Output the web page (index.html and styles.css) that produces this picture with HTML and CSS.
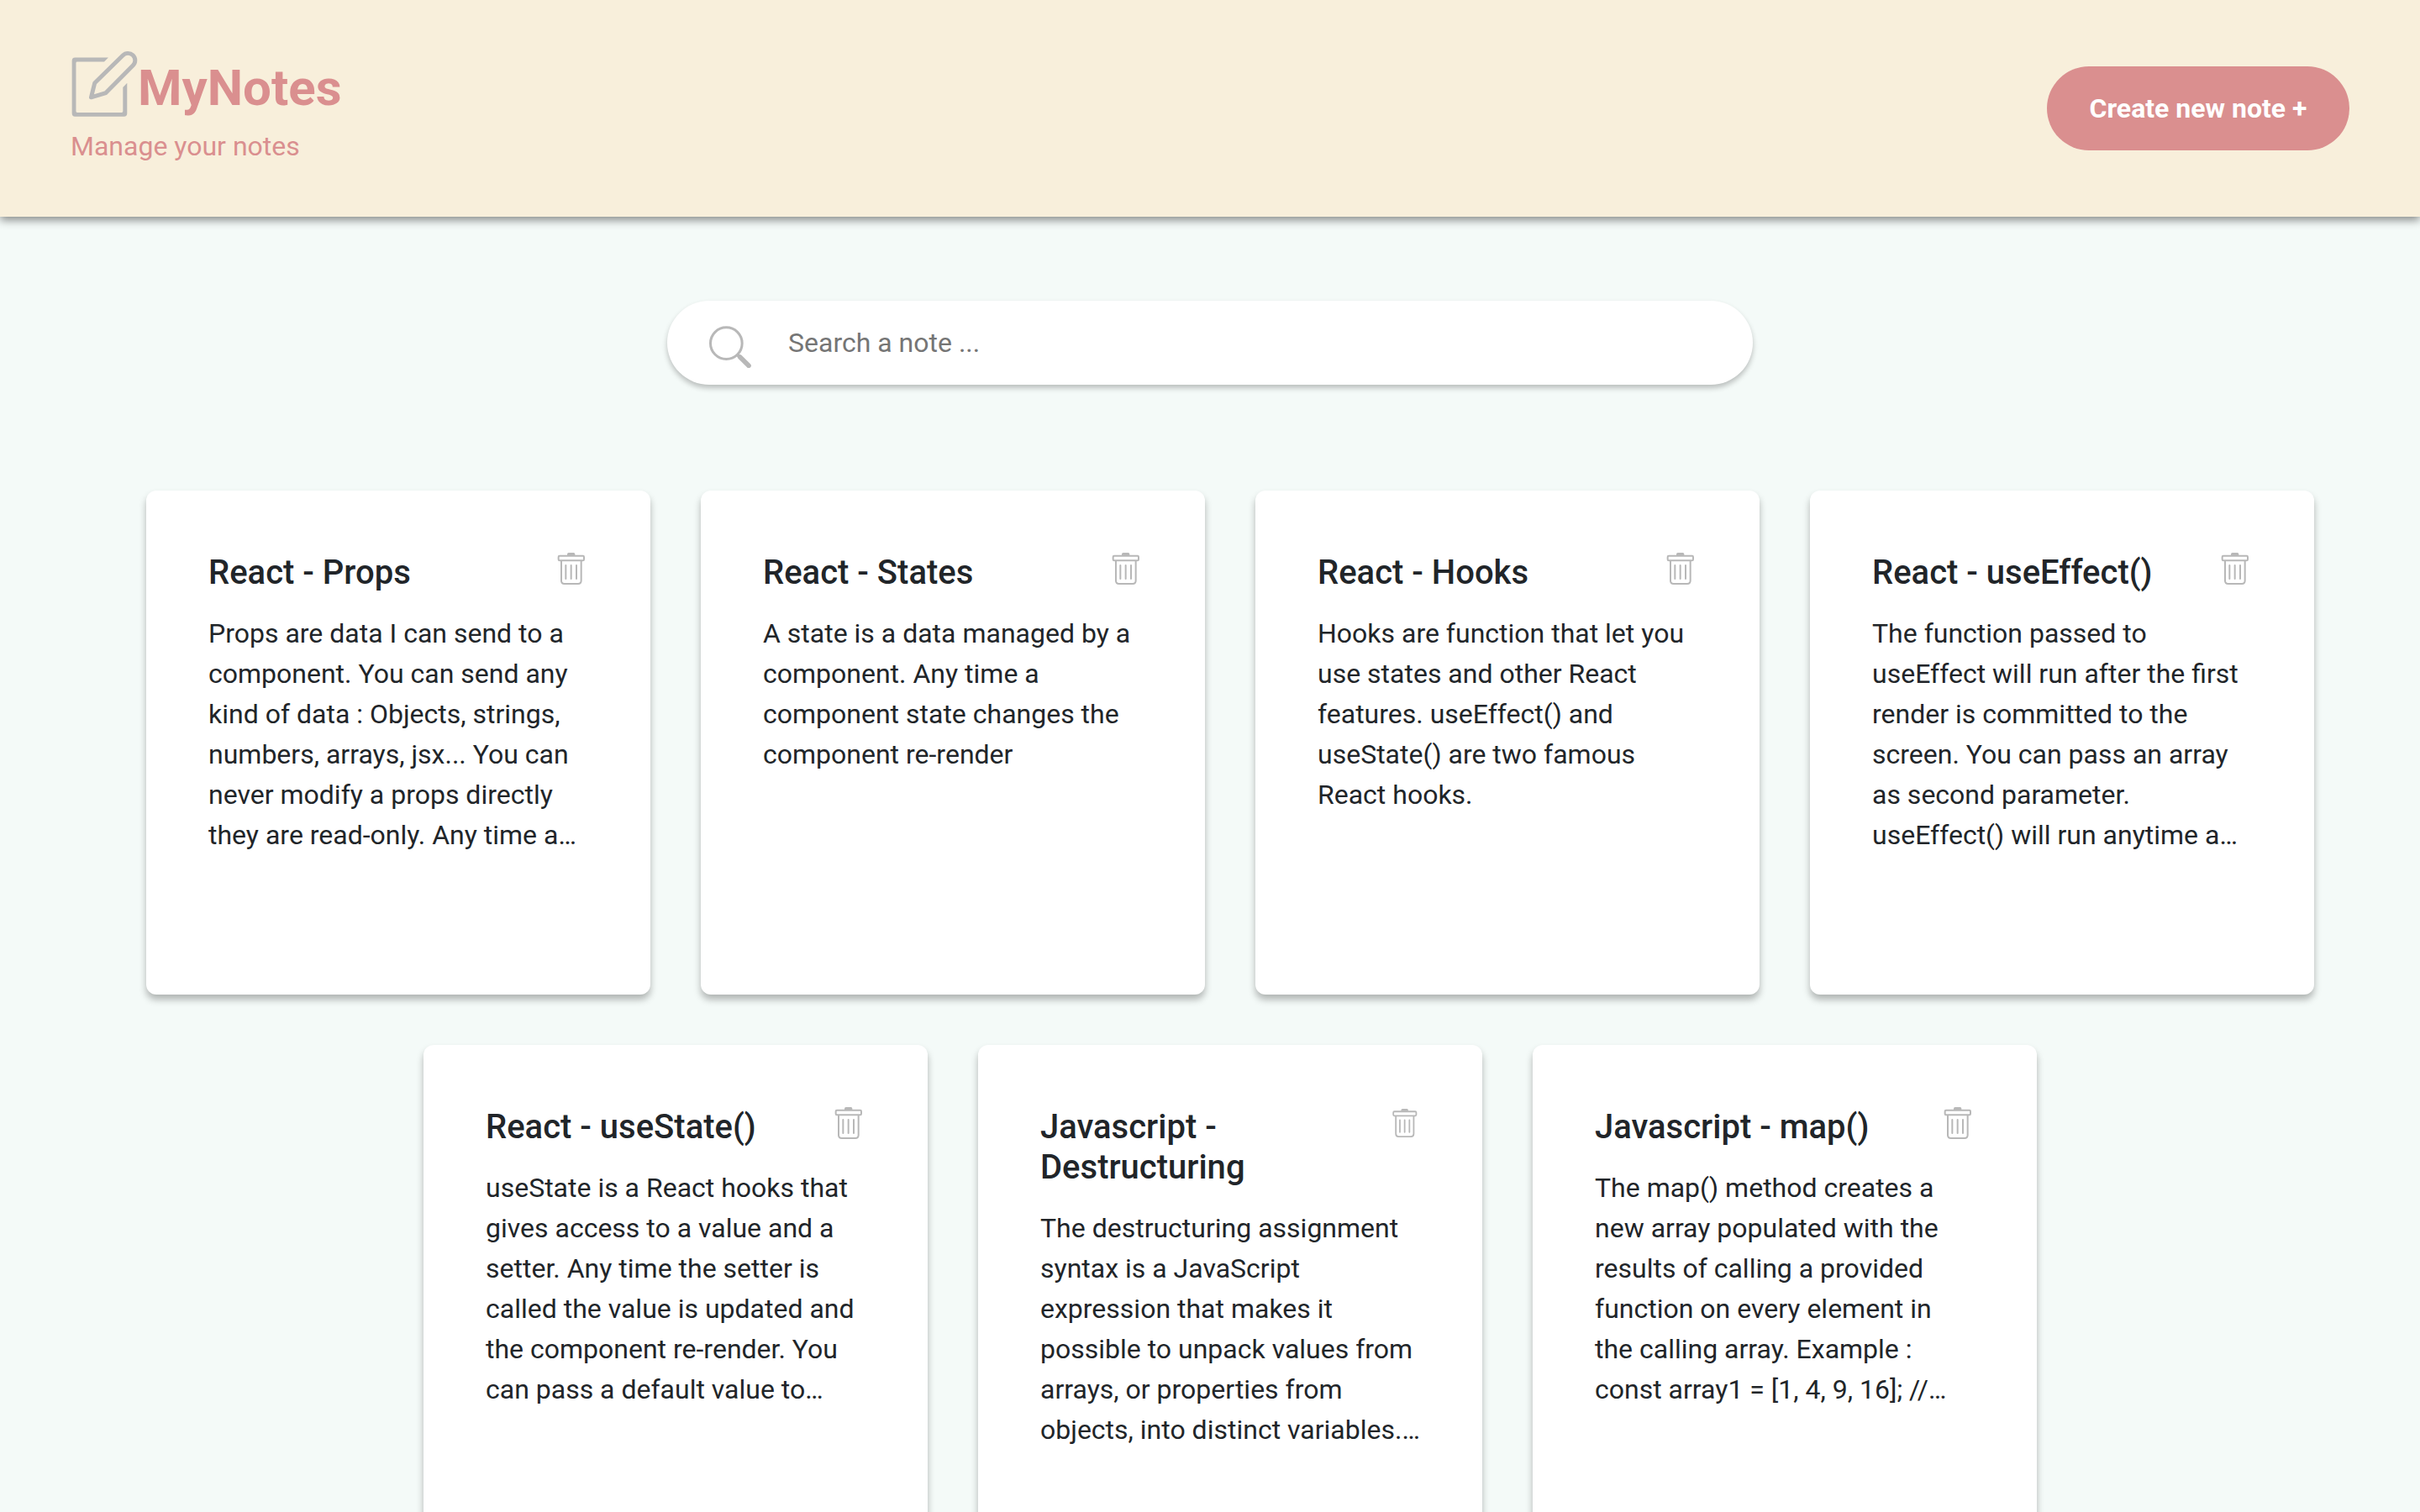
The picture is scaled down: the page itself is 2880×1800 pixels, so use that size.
FILE: index.html
```html
<!DOCTYPE html>
<html lang="en">
<head>
<meta charset="utf-8">
<meta name="viewport" content="width=device-width, initial-scale=1">
<title>MyNotes</title>
<link rel="stylesheet" href="styles.css">
</head>
<body>
<svg class="sprite" aria-hidden="true">
  <symbol id="trash" viewBox="0 0 120 114">
    <path d="M45 9v-4q0-5 5-5h18q5 0 5 5v4z" fill="currentColor"/>
    <rect x="14" y="11" width="91" height="17" rx="4" fill="none" stroke="currentColor" stroke-width="6"/>
    <path d="M24 29v71q0 11 11 11h49q11 0 11-11V29" fill="none" stroke="currentColor" stroke-width="6"/>
    <path d="M40 45v48M59 45v48M78 45v48" fill="none" stroke="currentColor" stroke-width="6" stroke-linecap="round"/>
  </symbol>
</svg>
<header class="header">
  <div class="brand">
    <div class="logo">
      <svg class="logo-icon" viewBox="-4 -3 242 242" aria-hidden="true" fill="none" stroke="currentColor" stroke-width="15">
        <path d="M132 22.500L117 37.500H20q-4.500 0-4.500 4.500V216q0 4.500 4.500 4.500H180q4.500 0 4.500-4.500V130L199.500 114V224q0 11-11 11H12q-11 0-11-11V34q0-11.500 11-11.500z" fill="currentColor" stroke="none"/>
        <path d="M184 15L83 114L70 166L123 150L221 51A25.500 25.500 0 0 0 184 15z" stroke-linejoin="round"/>
      </svg>
      <h1 class="logo-text">MyNotes</h1>
    </div>
    <p class="subtitle">Manage your notes</p>
  </div>
  <button class="create" type="button">Create new note +</button>
</header>
<main class="main">
  <label class="search">
    <svg class="search-icon" viewBox="0 0 150 150" aria-hidden="true" fill="none" stroke="currentColor">
      <circle cx="61" cy="62" r="56.500" stroke-width="9"/>
      <path d="M99 101l10 10" stroke-width="12"/>
      <path d="M110 111l31 31" stroke-width="17" stroke-linecap="round"/>
    </svg>
    <input class="search-input" type="text" placeholder="Search a note ..." aria-label="Search a note">
  </label>
  <section class="notes">
    <article class="card">
      <div class="card-head"><h2 class="card-title">React - Props</h2><button class="delete" type="button" aria-label="Delete note"><svg class="delete-icon"><use href="#trash"/></svg></button></div>
      <p class="card-text">Props are data I can send to a component. You can send any kind of data : Objects, strings, numbers, arrays, jsx... You can never modify a props directly they are read-only. Any time a…</p>
    </article>
    <article class="card">
      <div class="card-head"><h2 class="card-title">React - States</h2><button class="delete" type="button" aria-label="Delete note"><svg class="delete-icon"><use href="#trash"/></svg></button></div>
      <p class="card-text">A state is a data managed by a component. Any time a component state changes the component re-render</p>
    </article>
    <article class="card">
      <div class="card-head"><h2 class="card-title">React - Hooks</h2><button class="delete" type="button" aria-label="Delete note"><svg class="delete-icon"><use href="#trash"/></svg></button></div>
      <p class="card-text">Hooks are function that let you use states and other React features. useEffect() and useState() are two famous React hooks.</p>
    </article>
    <article class="card">
      <div class="card-head"><h2 class="card-title">React - useEffect()</h2><button class="delete" type="button" aria-label="Delete note"><svg class="delete-icon"><use href="#trash"/></svg></button></div>
      <p class="card-text">The function passed to useEffect will run after the first render is committed to the screen. You can pass an array as second parameter. useEffect() will run anytime a…</p>
    </article>
    <article class="card">
      <div class="card-head"><h2 class="card-title">React - useState()</h2><button class="delete" type="button" aria-label="Delete note"><svg class="delete-icon"><use href="#trash"/></svg></button></div>
      <p class="card-text">useState is a React hooks that gives access to a value and a setter. Any time the setter is called the value is updated and the component re-render. You can pass a default value to…</p>
    </article>
    <article class="card">
      <div class="card-head"><h2 class="card-title">Javascript - Destructuring</h2><button class="delete" type="button" aria-label="Delete note"><svg class="delete-icon"><use href="#trash"/></svg></button></div>
      <p class="card-text">The destructuring assignment syntax is a JavaScript expression that makes it possible to unpack values from arrays, or properties from objects, into distinct variables.…</p>
    </article>
    <article class="card">
      <div class="card-head"><h2 class="card-title">Javascript - map()</h2><button class="delete" type="button" aria-label="Delete note"><svg class="delete-icon"><use href="#trash"/></svg></button></div>
      <p class="card-text">The map() method creates a new array populated with the results of calling a provided function on every element in the calling array. Example : const array1 = [1, 4, 9, 16]; //…</p>
    </article>
  </section>
</main>
</body>
</html>
```

FILE: styles.css
```css
* {
  box-sizing: border-box;
}

body {
  margin: 0;
  background: #f4faf8;
  color: #212529;
  font-family: Roboto, "Liberation Sans", sans-serif;
  font-size: 32px;
  line-height: 48px;
}

h1, h2, p {
  margin: 0;
}

button {
  border: 0;
  font: inherit;
  cursor: pointer;
}

.sprite {
  display: none;
}

.header {
  display: flex;
  justify-content: space-between;
  align-items: center;
  padding: 60px 84px;
  background: #f8efdb;
  box-shadow: 0 4px 10px rgba(0, 0, 0, 0.45);
}

.logo {
  display: flex;
  align-items: flex-start;
  height: 90px;
}

.logo-icon {
  width: 80px;
  height: 80px;
  color: #b8b8b8;
}

.logo-text {
  font-size: 60px;
  line-height: 90px;
  font-weight: 700;
  color: #da8f8f;
}

.subtitle {
  color: #da8f8f;
}

.create {
  min-width: 360px;
  height: 100px;
  padding: 0 50px;
  border-radius: 50px;
  background: #da8f8f;
  color: #fff;
  font-weight: 700;
}

.main {
  padding: 100px 0;
}

.search {
  display: flex;
  align-items: center;
  gap: 44px;
  width: 90%;
  max-width: 1292px;
  height: 100px;
  margin: 0 auto 126px;
  padding: 0 50px;
  border-radius: 50px;
  background: #fff;
  box-shadow: 0 4px 6px rgba(0, 0, 0, 0.24);
}

.search-icon {
  width: 50px;
  height: 50px;
  margin-top: 10px;
  color: #b8b8b8;
}

.search-input {
  flex: 1;
  height: 48px;
  padding: 0;
  border: 0;
  outline: 0;
  background: transparent;
  color: #212529;
  font: inherit;
}

.search-input::placeholder {
  color: #757575;
}

.notes {
  display: flex;
  flex-wrap: wrap;
  justify-content: center;
  gap: 60px;
  padding-left: 48px;
}

.card {
  width: 600px;
  min-height: 600px;
  padding: 74px;
  border-radius: 12px;
  background: #fff;
  box-shadow: 0 6px 8px rgba(0, 0, 0, 0.28);
}

.card-head {
  display: flex;
  justify-content: space-between;
  align-items: flex-start;
  margin-bottom: 24px;
}

.card-title {
  font-size: 40px;
  line-height: 48px;
  font-weight: 500;
}

.delete {
  width: 40px;
  min-width: 0;
  height: 38px;
  padding: 0;
  background: transparent;
  color: #b8b8b8;
}

.delete-icon {
  display: block;
  width: 100%;
  height: 38px;
}
```
